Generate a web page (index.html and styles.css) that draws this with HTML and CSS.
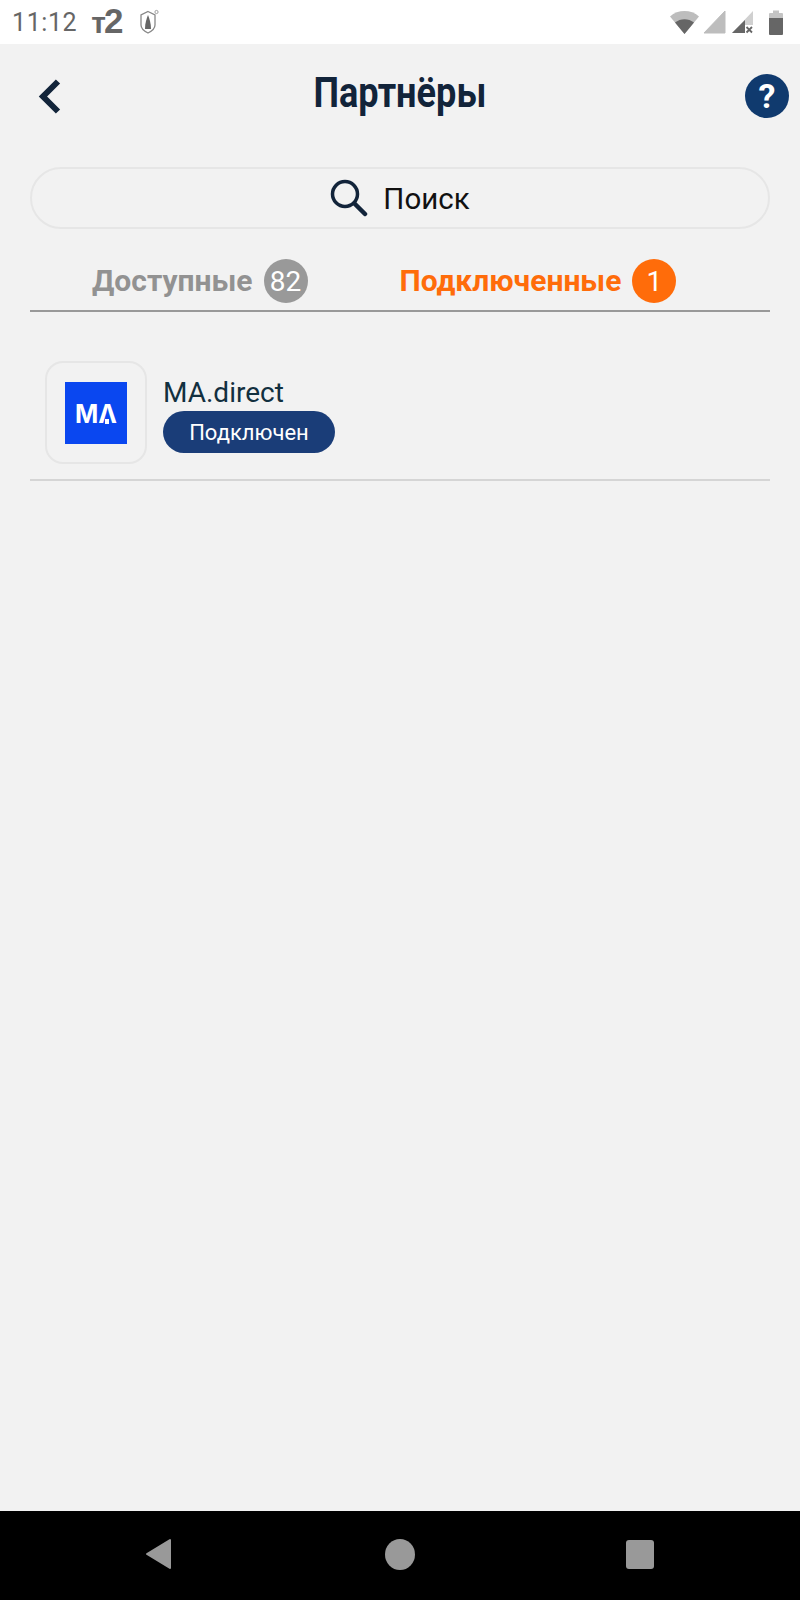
FILE: index.html
```html
<!DOCTYPE html>
<html lang="ru">
<head>
  <meta charset="UTF-8">
  <title>Партнёры</title>
  <link rel="stylesheet" href="styles.css">
</head>
<body>
  <div class="screen">

    <div class="status-bar">
      <span class="time">11:12</span>
      <span class="carrier"><span class="carrier-t">т</span><span class="carrier-2">2</span></span>
      <svg class="shield" width="20" height="26" viewBox="0 0 20 26">
        <path d="M9 2.5 L16 6 V16 C16 20 12 22.5 9 24 C6 22.5 2 20 2 16 V6 Z" fill="none" stroke="#888" stroke-width="1.3"/>
        <path d="M9 6 C10.5 10 12 14 12 20 H6 C6 14 7.5 10 9 6 Z" fill="#666"/>
        <circle cx="17.5" cy="3" r="1.6" fill="none" stroke="#888" stroke-width="0.8"/>
      </svg>
      <div class="status-icons">
        <svg width="29" height="23" viewBox="0 0 29 23">
          <path d="M0 5.5 C8 -1.8 21 -1.8 29 5.5 L14.5 23 Z" fill="#bdbdbd"/>
          <path d="M5 11.5 C10.5 7 18.5 7 24 11.5 L14.5 23 Z" fill="#666"/>
        </svg>
        <svg class="signal-a" width="23" height="24" viewBox="0 0 23 24">
          <path d="M22 1 V23 H1 Z" fill="#bdbdbd" stroke="#bdbdbd" stroke-linejoin="round"/>
        </svg>
        <svg class="signal-b" width="23" height="24" viewBox="0 0 23 24">
          <path d="M22 1 V15 H14 V23 H1 Z" fill="#d0d0d0"/>
          <path d="M14 10 V23 H1 L14 10 Z" fill="#666"/>
          <path d="M15.5 17 L21 22.5 M21 17 L15.5 22.5" stroke="#666" stroke-width="1.8"/>
        </svg>
        <svg class="battery" width="14" height="25" viewBox="0 0 14 25">
          <path d="M4 0.5 H10 V3 H13 A1 1 0 0 1 14 4 V9 H0 V4 A1 1 0 0 1 1 3 H4 Z" fill="#c4c4c4"/>
          <path d="M0 8 H14 V24 A1 1 0 0 1 13 25 H1 A1 1 0 0 1 0 24 Z" fill="#666"/>
        </svg>
      </div>
    </div>

    <div class="content">
      <div class="header">
        <button class="back">
          <svg width="24" height="37" viewBox="0 0 24 37">
            <path d="M20 3.5 L5 18.5 L20 33.5" fill="none" stroke="#12243a" stroke-width="6"/>
          </svg>
        </button>
        <h1 class="title">Партнёры</h1>
        <button class="help">?</button>
      </div>

      <div class="search">
        <svg width="38" height="38" viewBox="0 0 38 38">
          <circle cx="15" cy="15" r="12.5" fill="none" stroke="#12243a" stroke-width="3.5"/>
          <path d="M24.5 24.5 L35 35" stroke="#12243a" stroke-width="4.5" stroke-linecap="round"/>
        </svg>
        <span class="search-label">Поиск</span>
      </div>

      <div class="tabs">
        <div class="tab">
          Доступные <span class="count">82</span>
        </div>
        <div class="tab tab-active">
          Подключенные <span class="count">1</span>
        </div>
      </div>

      <div class="partner">
        <div class="partner-icon">
          <div class="logo">MΛ<span class="logo-dot"></span></div>
        </div>
        <div class="partner-info">
          <div class="partner-name">MA.direct</div>
          <div class="partner-status">Подключен</div>
        </div>
      </div>
    </div>

    <div class="nav-bar">
      <svg width="27" height="32" viewBox="0 0 27 32">
        <path d="M25 2 V30 L2 16 Z" fill="#999" stroke="#999" stroke-width="2" stroke-linejoin="round"/>
      </svg>
      <div class="nav-home"></div>
      <div class="nav-recent"></div>
    </div>

  </div>
</body>
</html>
```

FILE: styles.css
```css
* {
  box-sizing: border-box;
}

body {
  margin: 0;
  font-family: Roboto, "Liberation Sans", sans-serif;
  background: #f2f2f2;
}

.screen {
  display: flex;
  flex-direction: column;
  height: 1600px;
}

.status-bar {
  display: flex;
  align-items: center;
  height: 44px;
  padding: 0 17px 0 12px;
  background: #fff;
  color: #666;
}

.time {
  font-size: 25px;
  letter-spacing: 0.6px;
}

.carrier {
  display: flex;
  align-items: baseline;
  margin: 0 0 4px 14px;
  font-family: "Liberation Sans", sans-serif;
  font-weight: bold;
  line-height: 1;
}

.carrier-t {
  font-size: 30px;
}

.carrier-2 {
  margin-left: -2px;
  font-size: 35px;
}

.shield {
  margin-left: 16px;
}

.status-icons {
  display: flex;
  align-items: center;
  margin-left: auto;
}

.signal-a {
  margin-left: 4px;
}

.signal-b {
  margin-left: 5px;
}

.battery {
  margin-left: 15px;
}

.content {
  flex: 1;
  padding: 0 30px;
}

.header {
  display: grid;
  grid-template-columns: 1fr auto 1fr;
  align-items: center;
  height: 104px;
  margin: 0 -19px;
}

.back {
  justify-self: start;
  display: flex;
  margin-left: 27px;
  padding: 0;
  border: none;
  background: none;
}

.title {
  margin: 0 0 9px;
  font-family: Roboto, sans-serif;
  font-size: 43px;
  font-weight: bold;
  color: #12243a;
  transform: scaleX(0.84);
}

.help {
  justify-self: end;
  width: 44px;
  height: 44px;
  padding: 0;
  border: none;
  border-radius: 50%;
  background: #103a6e;
  color: #fff;
  font-family: Roboto, sans-serif;
  font-size: 34px;
  font-weight: bold;
}

.search {
  display: flex;
  align-items: center;
  justify-content: center;
  gap: 15px;
  height: 62px;
  margin-top: 19px;
  border: 2px solid #e6e6e6;
  border-radius: 31px;
}

.search-label {
  padding-top: 2px;
  font-size: 29.5px;
  color: #111;
}

.tabs {
  display: flex;
  gap: 92px;
  height: 83px;
  padding: 30px 0 0 62px;
  border-bottom: 2px solid #999;
}

.tab {
  display: flex;
  align-items: center;
  gap: 11px;
  height: 44px;
  padding-bottom: 2px;
  font-size: 30px;
  font-weight: bold;
  color: #929292;
}

.tab-active {
  color: #ff6c0a;
}

.count {
  display: flex;
  align-items: center;
  justify-content: center;
  width: 44px;
  height: 44px;
  margin-bottom: -2px;
  border-radius: 50%;
  background: #999;
  color: #fff;
  font-size: 28px;
  font-weight: normal;
}

.tab-active .count {
  background: #ff6c0a;
}

.partner {
  display: flex;
  gap: 16px;
  padding: 49px 15px 15px;
  border-bottom: 2px solid #d5d5d5;
}

.partner-icon {
  display: flex;
  align-items: center;
  justify-content: center;
  width: 102px;
  height: 103px;
  border: 2px solid #e6e6e6;
  border-radius: 18px;
}

.logo {
  position: relative;
  display: flex;
  align-items: center;
  justify-content: center;
  width: 62px;
  height: 62px;
  padding-top: 2px;
  background: #0a47f0;
  color: #fff;
  font-family: Inter, sans-serif;
  font-size: 25px;
  font-weight: 700;
}

.logo-dot {
  position: absolute;
  left: 40px;
  top: 37px;
  width: 4px;
  height: 5px;
  background: #fff;
}

.partner-info {
  display: flex;
  flex-direction: column;
  align-items: flex-start;
}

.partner-name {
  height: 50px;
  padding-top: 16px;
  font-size: 28px;
  line-height: 32px;
  color: #12303f;
}

.partner-status {
  width: 172px;
  height: 42px;
  padding-top: 1px;
  border-radius: 21px;
  background: #1a3d78;
  color: #fff;
  font-size: 22px;
  line-height: 42px;
  text-align: center;
}

.nav-bar {
  display: flex;
  align-items: center;
  height: 89px;
  padding-bottom: 3px;
  padding-left: 145px;
  background: #000;
}

.nav-home {
  width: 30px;
  height: 31px;
  margin-left: 213px;
  border-radius: 50%;
  background: #999;
}

.nav-recent {
  width: 28px;
  height: 29px;
  margin-left: 211px;
  border-radius: 3px;
  background: #999;
}
```
